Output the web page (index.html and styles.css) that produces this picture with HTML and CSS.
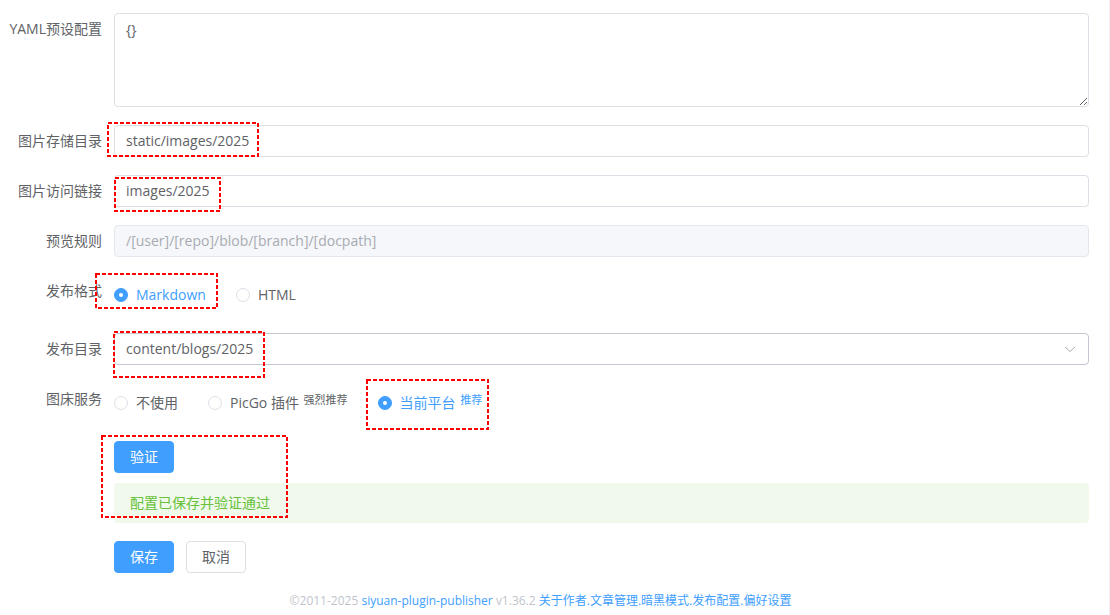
FILE: index.html
```html
<!DOCTYPE html>
<html lang="zh-CN">
<head>
<meta charset="utf-8">
<title>发布配置</title>
<link rel="stylesheet" href="styles.css">
</head>
<body>
<div class="page">
  <form class="form">
    <div class="item">
      <label class="label">YAML预设配置</label>
      <div class="content"><textarea class="textarea">{}</textarea></div>
    </div>
    <div class="item">
      <label class="label">图片存储目录</label>
      <div class="content"><div class="input">static/images/2025</div></div>
    </div>
    <div class="item">
      <label class="label">图片访问链接</label>
      <div class="content"><div class="input">images/2025</div></div>
    </div>
    <div class="item">
      <label class="label">预览规则</label>
      <div class="content"><div class="input disabled">/[user]/[repo]/blob/[branch]/[docpath]</div></div>
    </div>
    <div class="item">
      <label class="label">发布格式</label>
      <div class="content radios">
        <span class="radio checked"><span class="dot"></span><span class="rtext">Markdown</span></span>
        <span class="radio"><span class="dot"></span><span class="rtext">HTML</span></span>
      </div>
    </div>
    <div class="item">
      <label class="label">发布目录</label>
      <div class="content">
        <div class="input select"><span>content/blogs/2025</span>
          <svg class="arrow" width="12" height="12" viewBox="0 0 12 12"><path d="M1 4 L6 8.5 L11 4" fill="none" stroke="#a8abb2" stroke-width="1"/></svg>
        </div>
      </div>
    </div>
    <div class="item">
      <label class="label">图床服务</label>
      <div class="content radios">
        <span class="radio"><span class="dot"></span><span class="rtext">不使用</span></span>
        <span class="radio"><span class="dot"></span><span class="rtext">PicGo 插件 <sup class="tip">强烈推荐</sup></span></span>
        <span class="radio checked"><span class="dot"></span><span class="rtext">当前平台 <sup class="tip">推荐</sup></span></span>
      </div>
    </div>
    <div class="item">
      <label class="label"></label>
      <div class="content stack">
        <div><button type="button" class="btn primary">验证</button></div>
        <div class="alert">配置已保存并验证通过</div>
      </div>
    </div>
    <div class="item">
      <label class="label"></label>
      <div class="content buttons">
        <button type="button" class="btn primary">保存</button>
        <button type="button" class="btn">取消</button>
      </div>
    </div>
  </form>
  <footer class="footer">
    <span class="muted">©2011-2025</span> <a class="link">siyuan-plugin-publisher</a> <span class="muted">v1.36.2</span> <a class="link">关于作者</a><span class="link">.</span><a class="link">文章管理</a><span class="link">.</span><a class="link">暗黑模式</a><span class="link">.</span><a class="link">发布配置</a><span class="link">.</span><a class="link">偏好设置</a>
  </footer>
  <svg class="annot" width="1110" height="615" viewBox="0 0 1110 615">
    <g fill="none" stroke="#ff0000" stroke-width="2" stroke-dasharray="4 2">
      <rect x="108" y="123" width="150" height="33"/>
      <rect x="115" y="178" width="105" height="33"/>
      <rect x="96" y="274" width="121" height="34"/>
      <rect x="114" y="332" width="150" height="45"/>
      <rect x="367" y="380" width="121" height="49"/>
      <rect x="102" y="436" width="185" height="81"/>
    </g>
  </svg>
</div>
</body>
</html>
```

FILE: styles.css
```css
* { box-sizing: border-box; }
html, body { margin: 0; padding: 0; background: #ffffff; }
body {
  font-family: "Open Sans", "Noto Sans CJK SC", sans-serif;
  font-size: 14px;
  color: #606266;
  width: 1110px;
  height: 615px;
  overflow: hidden;
}
.page {
  position: relative;
  width: 1110px;
  height: 615px;
  padding: 13px 20px 0 0;
  border-right: 1px solid #f0f0f2;
}
.form { display: flex; flex-direction: column; gap: 18px; }
.item { display: flex; align-items: flex-start; }
.label {
  flex: 0 0 114px;
  padding-right: 12px;
  text-align: right;
  line-height: 32px;
  height: 32px;
  font-size: 14px;
  color: #606266;
  white-space: nowrap;
}
.content { flex: 1; min-width: 0; }
.textarea {
  display: block;
  width: 100%;
  height: 94px;
  padding: 5px 11px;
  border: 1px solid #dcdfe6;
  border-radius: 4px;
  font: inherit;
  font-size: 14px;
  line-height: 1.5;
  color: #606266;
  resize: vertical;
  outline: none;
}
.input {
  height: 32px;
  line-height: 30px;
  padding: 0 11px;
  border: 1px solid #dcdfe6;
  border-radius: 4px;
  color: #606266;
  white-space: nowrap;
}
.input.disabled { background: #f5f7fa; border-color: #e4e7ed; color: #a8abb2; }
.select {
  display: flex;
  align-items: center;
  justify-content: space-between;
  border-color: #c4c7cf;
}
.arrow { display: block; margin-right: 1px; }
.radios { display: flex; align-items: center; height: 40px; }
.radio { display: inline-flex; align-items: center; margin-right: 30px; white-space: nowrap; }
.dot {
  width: 14px; height: 14px;
  border: 1px solid #dcdfe6;
  border-radius: 50%;
  background: #fff;
  position: relative;
  flex: 0 0 14px;
}
.radio.checked .dot { background: #409eff; border-color: #409eff; }
.radio.checked .dot::after {
  content: "";
  position: absolute;
  left: 50%; top: 50%;
  width: 4px; height: 4px;
  margin: -2px 0 0 -2px;
  border-radius: 50%;
  background: #fff;
}
.rtext { padding-left: 8px; font-size: 14px; color: #606266; line-height: 20px; }
.radio.checked .rtext { color: #409eff; }
.tip { font-size: 11px; vertical-align: 4px; line-height: 1; margin-left: 1px; }
.stack { display: flex; flex-direction: column; gap: 10px; }
.btn {
  height: 32px;
  padding: 0 15px;
  border: 1px solid #dcdfe6;
  border-radius: 4px;
  background: #fff;
  color: #606266;
  font-family: inherit;
  font-size: 14px;
  line-height: 30px;
  cursor: pointer;
}
.btn.primary { background: #409eff; border-color: #409eff; color: #fff; }
.buttons { display: flex; gap: 12px; }
.alert {
  height: 40px;
  padding: 0 16px;
  line-height: 40px;
  background: #f0f9eb;
  color: #67c23a;
  border-radius: 4px;
  font-size: 14px;
}
.footer {
  margin-top: 18px;
  text-align: center;
  font-size: 12px;
  line-height: 20px;
  padding-right: 8px;
  white-space: nowrap;
}
.muted { color: #c0c4cc; }
.link { color: #409eff; text-decoration: none; }
.annot { position: absolute; left: 0; top: 0; pointer-events: none; }
```
